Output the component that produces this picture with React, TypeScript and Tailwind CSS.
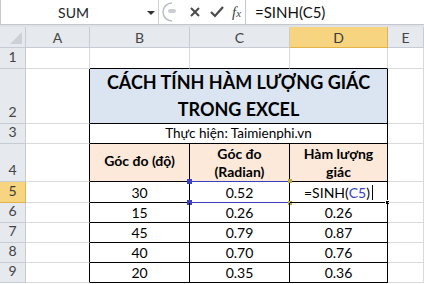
import React from "react";

const font = { fontFamily: "Lato, 'Open Sans', sans-serif" };

const colW = [26, 64, 100, 100, 98, 36];
const rowH = [21, 55, 20, 38, 21, 20, 20, 20, 20];

const data = [
  ["30", "0.52", ""],
  ["15", "0.26", "0.26"],
  ["45", "0.79", "0.87"],
  ["40", "0.70", "0.76"],
  ["20", "0.35", "0.36"],
];

function RowHead({ n, h, active }: { n: number; h: number; active?: boolean }) {
  return (
    <div
      className={`flex shrink-0 items-end justify-center border-r border-b pb-[1px] text-[14px] ${
        active
          ? "border-[#e3b34a] bg-[#f7d47f] text-[#3a3a3a]"
          : "border-[#c6ccd6] bg-[#e6e9ee] text-[#444]"
      }`}
      style={{ width: colW[0], height: h }}
    >
      {n}
    </div>
  );
}

function Cell({
  w,
  h,
  className = "",
  children,
}: {
  w: number;
  h: number;
  className?: string;
  children?: React.ReactNode;
}) {
  return (
    <div
      className={`relative flex shrink-0 items-center justify-center border-r border-b ${className}`}
      style={{ width: w, height: h }}
    >
      {children}
    </div>
  );
}

export default function App() {
  const grid = "border-[#dadada]";
  const line = "border-black";

  return (
    <div className="h-[284px] w-[424px] overflow-hidden bg-white text-black" style={font}>
      {/* formula bar */}
      <div className="flex h-[25px] border-b border-l border-[#c3c8d0] bg-white">
        <div className="relative flex w-[158px] items-center justify-center border-r border-[#d0d4da] pr-[12px] text-[14px] text-[#222]">
          SUM
          <span className="absolute right-[3px] top-[11px] h-0 w-0 border-x-[4px] border-t-[4px] border-x-transparent border-t-[#333]" />
        </div>
        <div className="flex w-[87px] items-center border-r border-[#c3c8d0]">
          <svg width="20" height="22" viewBox="0 0 20 22" className="ml-[1px]">
            <path d="M12 2 A9 9 0 0 0 12 20" fill="none" stroke="#b8bec7" strokeWidth="1.5" />
            <rect x="8" y="8" width="8" height="4" rx="2" fill="#c9cdd3" />
          </svg>
          <svg width="12" height="12" viewBox="0 0 12 12" className="ml-[9px]">
            <path d="M2 2 L10 10 M10 2 L2 10" stroke="#4a4a4a" strokeWidth="2" />
          </svg>
          <svg width="14" height="12" viewBox="0 0 14 12" className="ml-[9px]">
            <path d="M1 6 L5 10 L13 1" fill="none" stroke="#4a4a4a" strokeWidth="2.2" />
          </svg>
          <span
            className="ml-[8px] text-[15px] italic text-[#444]"
            style={{ fontFamily: "'Liberation Serif', serif" }}
          >
            f<span className="text-[11px]">x</span>
          </span>
        </div>
        <div className="flex items-center pl-[9px] text-[15px] text-[#111]">=SINH(C5)</div>
      </div>
      <div className="h-[2px] bg-[#dfe3e8]" />

      {/* column headers */}
      <div className="flex h-[21px]">
        <div
          className="relative shrink-0 border-r border-b border-[#c6ccd6] bg-[#e6e9ee]"
          style={{ width: colW[0] }}
        >
          <svg width="12" height="12" className="absolute bottom-[3px] right-[3px]">
            <path d="M12 0 L12 12 L0 12 Z" fill="#cdd1d7" />
          </svg>
        </div>
        {["A", "B", "C", "D", "E"].map((c, i) => (
          <div
            key={c}
            className={`flex shrink-0 items-center justify-center border-r border-b text-[14px] ${
              c === "D"
                ? "border-[#e3b34a] bg-[#f7d47f] text-[#3a3a3a]"
                : "border-[#c6ccd6] bg-[#e6e9ee] text-[#444]"
            }`}
            style={{ width: colW[i + 1] }}
          >
            {c}
          </div>
        ))}
      </div>

      {/* row 1 */}
      <div className="flex">
        <RowHead n={1} h={rowH[0]} />
        <Cell w={colW[1]} h={rowH[0]} className={grid} />
        <Cell w={colW[2]} h={rowH[0]} className={`border-r-[#dadada] ${line}`} />
        <Cell w={colW[3]} h={rowH[0]} className={`border-r-[#dadada] ${line}`} />
        <Cell w={colW[4]} h={rowH[0]} className={`${line} border-r-[#dadada]`} />
        <Cell w={colW[5]} h={rowH[0]} className={grid} />
      </div>

      {/* row 2 title */}
      <div className="flex">
        <RowHead n={2} h={rowH[1]} />
        <Cell w={colW[1]} h={rowH[1]} className={`${grid} border-r-black`} />
        <Cell
          w={colW[2] + colW[3] + colW[4]}
          h={rowH[1]}
          className={`${line} bg-[#dbe5f1] text-center text-[18px] font-bold leading-[27px]`}
        >
          CÁCH TÍNH HÀM LƯỢNG GIÁC
          <br />
          TRONG EXCEL
        </Cell>
        <Cell w={colW[5]} h={rowH[1]} className={grid} />
      </div>

      {/* row 3 */}
      <div className="flex">
        <RowHead n={3} h={rowH[2]} />
        <Cell w={colW[1]} h={rowH[2]} className={`${grid} border-r-black`} />
        <Cell w={colW[2] + colW[3] + colW[4]} h={rowH[2]} className={`${line} text-[13.5px]`}>
          Thực hiện: Taimienphi.vn
        </Cell>
        <Cell w={colW[5]} h={rowH[2]} className={grid} />
      </div>

      {/* row 4 headers */}
      <div className="flex">
        <RowHead n={4} h={rowH[3]} />
        <Cell w={colW[1]} h={rowH[3]} className={`${grid} border-r-black`} />
        <Cell w={colW[2]} h={rowH[3]} className={`${line} bg-[#fce9da] pb-[4px] text-[14px] font-bold`}>
          Góc đo (độ)
        </Cell>
        <Cell w={colW[3]} h={rowH[3]} className={`${line} bg-[#fce9da] text-center text-[14px] font-bold leading-[18px]`}>
          Góc đo
          <br />
          (Radian)
        </Cell>
        <Cell w={colW[4]} h={rowH[3]} className={`${line} bg-[#fce9da] text-center text-[14px] font-bold leading-[18px]`}>
          Hàm lượng
          <br />
          giác
        </Cell>
        <Cell w={colW[5]} h={rowH[3]} className={grid} />
      </div>

      {/* data rows */}
      {data.map((r, i) => {
        const h = rowH[4 + i];
        const first = i === 0;
        return (
          <div key={i} className="flex">
            <RowHead n={5 + i} h={h} active={first} />
            <Cell w={colW[1]} h={h} className={`${grid} border-r-black`} />
            <Cell w={colW[2]} h={h} className={`${line} text-[14px]`}>
              {r[0]}
            </Cell>
            <Cell
              w={colW[3]}
              h={h}
              className={`${line} text-[14px] ${first ? "border-b-[#3b3fc0]" : ""}`}
            >
              {r[1]}
              {first && (
                <>
                  <span className="absolute left-[-1px] top-[-1px] h-[1px] w-[100px] bg-[#3b3fc0]" />
                  <span className="absolute left-[-3px] top-[-3px] h-[5px] w-[5px] bg-[#3b3fc0]" />
                  <span className="absolute bottom-[-3px] left-[-3px] h-[5px] w-[5px] bg-[#3b3fc0]" />
                  <span className="absolute right-[-3px] top-[-3px] h-[4px] w-[4px] bg-[#b8a640]" />
                  <span className="absolute bottom-[-3px] right-[-3px] h-[4px] w-[4px] bg-[#b8a640]" />
                </>
              )}
            </Cell>
            <Cell w={colW[4]} h={h} className={`${line} text-[14px]`}>
              {first ? (
                <span className="flex items-center">
                  =SINH(<span className="text-[#3b3fc0]">C5</span>)
                  <span className="ml-[2px] inline-block h-[15px] w-[1px] bg-black" />
                </span>
              ) : (
                r[2]
              )}
              {first && (
                <span className="absolute bottom-[-3px] right-[-3px] h-[5px] w-[5px] border border-white bg-black" />
              )}
            </Cell>
            <Cell w={colW[5]} h={h} className={grid} />
          </div>
        );
      })}
    </div>
  );
}
